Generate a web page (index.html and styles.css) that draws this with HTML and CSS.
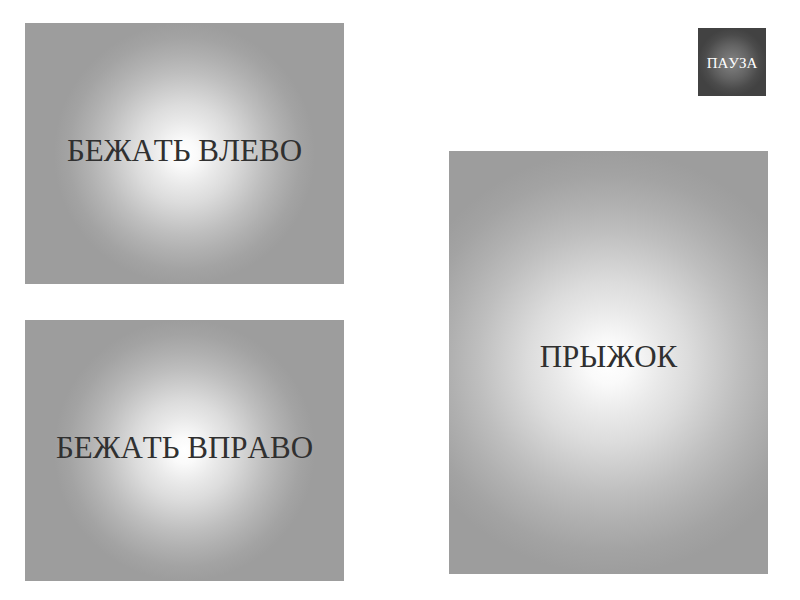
FILE: index.html
```html
<!DOCTYPE html>
<html lang="ru">
<head>
<meta charset="utf-8">
<meta name="viewport" content="width=device-width, initial-scale=1">
<title>Управление</title>
<link rel="stylesheet" href="styles.css">
</head>
<body>
<main class="controls">
  <div class="move">
    <button class="pad" type="button">БЕЖАТЬ ВЛЕВО</button>
    <button class="pad" type="button">БЕЖАТЬ ВПРАВО</button>
  </div>
  <div class="action">
    <button class="pause" type="button">ПАУЗА</button>
    <button class="pad pad-jump" type="button">ПРЫЖОК</button>
  </div>
</main>
</body>
</html>
```

FILE: styles.css
```css
* {
  box-sizing: border-box;
}

body {
  margin: 0;
  background: #fff;
  font-family: "Liberation Serif", "Times New Roman", serif;
}

button {
  margin: 0;
  border: 0;
  font-family: inherit;
  font-kerning: none;
  white-space: nowrap;
  cursor: pointer;
}

.controls {
  display: grid;
  grid-template-columns: 1fr 1fr;
  gap: 105px;
  min-height: 100vh;
  padding: 23px 32px 19px 25px;
}

.move {
  display: grid;
  grid-template-rows: 1fr 1fr;
  gap: 36px;
}

.action {
  display: flex;
  flex-direction: column;
  gap: 55px;
  padding: 5px 0 7px;
}

.pad {
  --glow: #fff 0%, #fafafa 10%, #e9e9e9 25%, #dcdcdc 38%, #cdcdcd 50%, #bebebe 62%, #b0b0b0 75%, #a3a3a3 89%, #9d9d9d 100%;
  padding: 0 0 6px;
  background: radial-gradient(circle closest-side, var(--glow));
  color: #303030;
  font-size: 31px;
  line-height: 36px;
}

.pad-jump {
  flex: 1;
  padding-bottom: 12px;
  background-image: radial-gradient(circle farthest-side, var(--glow));
}

.pause {
  align-self: flex-end;
  width: 68px;
  height: 68px;
  margin-right: 2px;
  padding: 2px 0 0;
  background: radial-gradient(circle closest-side, #808080 0%, #7d7d7d 10%, #636363 50%, #4b4b4b 80%, #424242 100%);
  color: #fff;
  font-size: 15px;
  line-height: 16px;
}
```
